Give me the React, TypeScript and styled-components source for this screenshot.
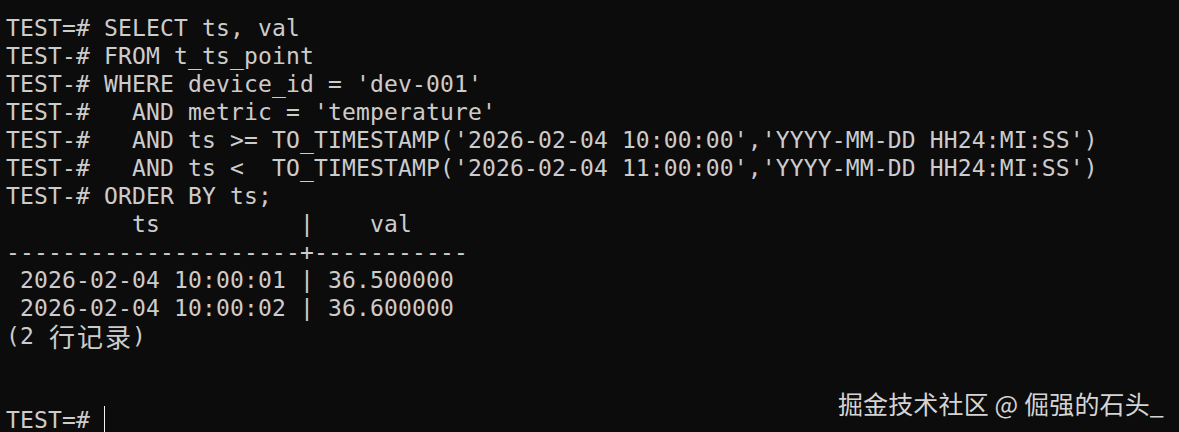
import React from "react";
import styled, { createGlobalStyle } from "styled-components";

const GlobalStyle = createGlobalStyle`
  html, body {
    margin: 0;
    padding: 0;
    background: #0c0c0c;
  }
  #root {
    width: 1179px;
    height: 432px;
    overflow: hidden;
  }
`;

const Terminal = styled.div`
  position: relative;
  box-sizing: border-box;
  width: 1179px;
  height: 432px;
  padding: 14px 0 0 6px;
  background: #0c0c0c;
  color: #cccccc;
  font-family: "DejaVu Sans Mono", "Liberation Mono", monospace;
  font-size: 23px;
  letter-spacing: 0.15px;
  overflow: hidden;
`;

const Line = styled.div`
  height: 28px;
  line-height: 28px;
  white-space: pre;
`;

const WideCell = styled.span`
  display: inline-block;
  width: 28px;
  height: 28px;
  text-align: center;
  font-family: "Noto Sans CJK SC", sans-serif;
  font-size: 26px;
  line-height: 28px;
  letter-spacing: 0;
  vertical-align: top;
`;

const Cursor = styled.span`
  display: inline-block;
  width: 1px;
  height: 28px;
  background: #f2f2f2;
  vertical-align: top;
`;

const Watermark = styled.div`
  position: absolute;
  right: 15px;
  bottom: 14px;
  color: #d4d4d4;
  font-family: "Noto Sans CJK SC", sans-serif;
  font-size: 25px;
  line-height: 30px;
  white-space: pre;
`;

const Wide: React.FC<{ text: string }> = ({ text }) => (
  <>
    {Array.from(text).map((ch, i) => (
      <WideCell key={i}>{ch}</WideCell>
    ))}
  </>
);

const lines: string[] = [
  "TEST=# SELECT ts, val",
  "TEST-# FROM t_ts_point",
  "TEST-# WHERE device_id = 'dev-001'",
  "TEST-#   AND metric = 'temperature'",
  "TEST-#   AND ts >= TO_TIMESTAMP('2026-02-04 10:00:00','YYYY-MM-DD HH24:MI:SS')",
  "TEST-#   AND ts <  TO_TIMESTAMP('2026-02-04 11:00:00','YYYY-MM-DD HH24:MI:SS')",
  "TEST-# ORDER BY ts;",
  "         ts          |    val",
  "---------------------+-----------",
  " 2026-02-04 10:00:01 | 36.500000",
  " 2026-02-04 10:00:02 | 36.600000",
];

export default function App() {
  return (
    <>
      <GlobalStyle />
      <Terminal>
        {lines.map((l, i) => (
          <Line key={i}>{l}</Line>
        ))}
        <Line>
          {"(2 "}
          <Wide text="行记录" />
          {")"}
        </Line>
        <Line />
        <Line />
        <Line>
          {"TEST=# "}
          <Cursor />
        </Line>
        <Watermark>掘金技术社区 @ 倔强的石头_</Watermark>
      </Terminal>
    </>
  );
}
